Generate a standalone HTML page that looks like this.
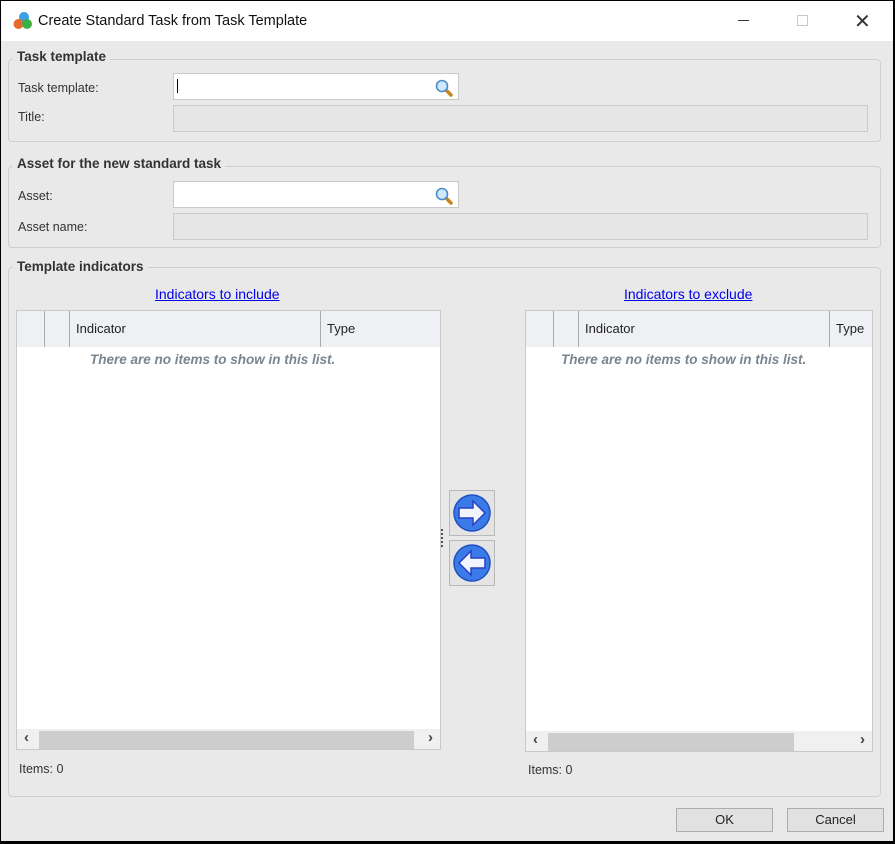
<!DOCTYPE html>
<html><head><style>
*{box-sizing:border-box;margin:0;padding:0}
body{width:895px;height:844px;background:#000;font-family:"Liberation Sans",sans-serif;font-size:13px;color:#222;position:relative;overflow:hidden}
.win{position:absolute;left:1px;top:1px;width:892px;height:840px;background:#e9e9e9}
.title{position:absolute;left:0;top:0;width:892px;height:40px;background:#fff}
.a{position:absolute}
.grp{position:absolute;border:1px solid #cfcfcf;border-radius:4px}
.leg{position:absolute;background:#e9e9e9;font-weight:bold;font-size:13.5px;color:#333;padding:0 4px}
.lbl{position:absolute;font-size:12.5px;color:#333}
.inp{position:absolute;background:#fff;border:1px solid #c9c9c9}
.ro{position:absolute;background:#e6e6e6;border:1px solid #cacaca}
.list{position:absolute;background:#fff;border:1px solid #c9c9c9}
.hdr{position:absolute;left:0;top:0;right:0;height:36px;background:#eef0f4}
.col{position:absolute;top:0;height:36px;border-left:1px solid #aaa}
.ht{position:absolute;top:10px;font-size:13px;color:#222}
.empty{position:absolute;top:41px;left:0;right:0;text-align:center;font-style:italic;font-weight:bold;color:#7a8590;font-size:13.5px}
.sb{position:absolute;left:0;right:0;bottom:0;height:20px;background:#f0f0f0}
.thumb{position:absolute;top:2px;height:18px;background:#cdcdcd}
.arr{position:absolute;top:0;font-size:15px;font-weight:bold;color:#444}
.link{position:absolute;color:#0000ee;text-decoration:underline;font-size:14px}
.btn{position:absolute;background:#e1e1e1;border:1px solid #adadad;text-align:center;font-size:13px;line-height:21px}
.ab{position:absolute;width:46px;height:46px;border:1px solid #b8b8b8;background:#e4e4e4}
</style></head><body>
<div class="win">
<div class="title">
<svg class="a" style="left:12px;top:10px" width="20" height="20" viewBox="0 0 20 20"><circle cx="11" cy="6" r="5" fill="#3aa0e8"/><circle cx="5.5" cy="13" r="5" fill="#e8692a"/><circle cx="14" cy="13" r="5" fill="#3cb043"/></svg>
<div class="a" style="left:37px;top:12px;font-size:14.5px;color:#111">Create Standard Task from Task Template</div>
<div class="a" style="left:737px;top:19px;width:11px;height:1px;background:#333"></div>
<div class="a" style="left:796px;top:14px;width:11px;height:11px;border:1px solid #c8c8c8"></div>
<div class="a" style="left:853px;top:8px;font-size:20px;color:#333">✕</div>
</div>

<div class="grp" style="left:7px;top:58px;width:873px;height:83px"></div>
<div class="leg" style="left:12px;top:48px">Task template</div>
<div class="lbl" style="left:17px;top:80px">Task template:</div>
<div class="inp" style="left:172px;top:72px;width:286px;height:27px"><div class="a" style="left:3px;top:5px;width:1px;height:14px;background:#000"></div>
<svg class="a" style="left:260px;top:4px" width="20" height="20" viewBox="0 0 20 20"><line x1="11" y1="11" x2="17" y2="17" stroke="#c8841c" stroke-width="3.5" stroke-linecap="round"/><circle cx="8" cy="8" r="5.5" fill="#cfe8fb" stroke="#4a8cc8" stroke-width="1.6"/></svg></div>
<div class="lbl" style="left:17px;top:109px">Title:</div>
<div class="ro" style="left:172px;top:104px;width:695px;height:27px"></div>

<div class="grp" style="left:7px;top:165px;width:873px;height:82px"></div>
<div class="leg" style="left:12px;top:155px">Asset for the new standard task</div>
<div class="lbl" style="left:17px;top:188px">Asset:</div>
<div class="inp" style="left:172px;top:180px;width:286px;height:27px">
<svg class="a" style="left:260px;top:4px" width="20" height="20" viewBox="0 0 20 20"><line x1="11" y1="11" x2="17" y2="17" stroke="#c8841c" stroke-width="3.5" stroke-linecap="round"/><circle cx="8" cy="8" r="5.5" fill="#cfe8fb" stroke="#4a8cc8" stroke-width="1.6"/></svg></div>
<div class="lbl" style="left:17px;top:219px">Asset name:</div>
<div class="ro" style="left:172px;top:212px;width:695px;height:27px"></div>

<div class="grp" style="left:7px;top:266px;width:873px;height:530px"></div>
<div class="leg" style="left:12px;top:258px">Template indicators</div>

<div class="link" style="left:154px;top:285px">Indicators to include</div>
<div class="list" style="left:15px;top:309px;width:425px;height:440px;overflow:hidden">
<div class="hdr"><div class="col" style="left:27px"></div><div class="col" style="left:52px"></div><div class="col" style="left:303px"></div>
<div class="ht" style="left:59px">Indicator</div><div class="ht" style="left:310px">Type</div></div>
<div class="empty" style="text-align:left;left:73px">There are no items to show in this list.</div>
<div class="sb"><div class="arr" style="left:7px">‹</div><div class="thumb" style="left:22px;width:375px"></div><div class="arr" style="right:7px">›</div></div>
</div>
<div class="lbl" style="left:18px;top:761px">Items: 0</div>

<div class="link" style="left:623px;top:285px">Indicators to exclude</div>
<div class="list" style="left:524px;top:309px;width:348px;height:442px;overflow:hidden">
<div class="hdr"><div class="col" style="left:27px"></div><div class="col" style="left:52px"></div><div class="col" style="left:303px"></div>
<div class="ht" style="left:59px">Indicator</div><div class="ht" style="left:310px">Type</div></div>
<div class="empty" style="text-align:left;left:35px">There are no items to show in this list.</div>
<div class="sb"><div class="arr" style="left:7px">‹</div><div class="thumb" style="left:22px;width:246px"></div><div class="arr" style="right:7px">›</div></div>
</div>
<div class="lbl" style="left:527px;top:762px">Items: 0</div>

<div class="a" style="left:440px;top:528px;width:2px;height:18px;background:repeating-linear-gradient(#555 0 2px,transparent 2px 4px)"></div>
<div class="ab" style="left:448px;top:489px"><svg width="44" height="44" viewBox="0 0 44 44"><circle cx="22" cy="22" r="18" fill="#3a7be8" stroke="#1f4fc0" stroke-width="1.5"/><path d="M9 17h14v-7l12 12-12 12v-7H9z" fill="#f2f4ff" stroke="#2a3fc8" stroke-width="1.5"/></svg></div>
<div class="ab" style="left:448px;top:539px"><svg width="44" height="44" viewBox="0 0 44 44"><circle cx="22" cy="22" r="18" fill="#3a7be8" stroke="#1f4fc0" stroke-width="1.5"/><path d="M35 17H21v-7L9 22l12 12v-7h14z" fill="#f2f4ff" stroke="#2a3fc8" stroke-width="1.5"/></svg></div>

<div class="btn" style="left:675px;top:807px;width:97px;height:24px">OK</div>
<div class="btn" style="left:786px;top:807px;width:97px;height:24px">Cancel</div>
</div>
</body></html>
